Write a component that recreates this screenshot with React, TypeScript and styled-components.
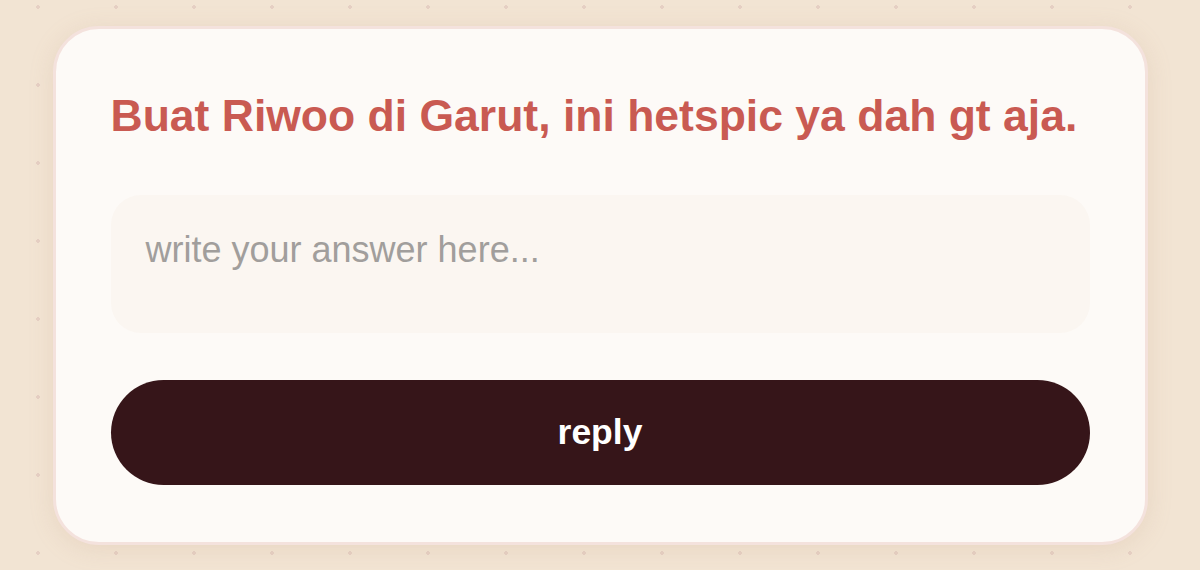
import React from 'react';
import styled, { createGlobalStyle } from 'styled-components';

const GlobalStyle = createGlobalStyle`
  html, body {
    margin: 0;
    padding: 0;
    height: 100%;
  }
  body {
    font-family: "Liberation Sans", Arial, Helvetica, sans-serif;
    background-color: #f2e4d3;
    background-image: radial-gradient(circle, #e6d0c4 1.6px, transparent 2px);
    background-size: 78px 78px;
    background-position: -1px -32px;
  }
  #root {
    height: 100%;
  }
`;

const Page = styled.div`
  height: 570px;
  display: flex;
  align-items: center;
  justify-content: center;
`;

const Card = styled.div`
  width: 1095px;
  height: 519px;
  box-sizing: border-box;
  background: #fdfaf7;
  border: 3px solid #f4e2dd;
  border-radius: 46px;
  box-shadow: 0 4px 24px rgba(190, 150, 120, 0.18);
  padding: 62px 55px 57px;
  display: flex;
  flex-direction: column;
`;

const Question = styled.h1`
  margin: 0;
  color: #c95a52;
  font-size: 44.5px;
  font-weight: 700;
  line-height: 50px;
  white-space: nowrap;
`;

const AnswerBox = styled.textarea`
  margin-top: 54px;
  height: 138px;
  box-sizing: border-box;
  border: none;
  outline: none;
  resize: none;
  background: #fbf6f1;
  border-radius: 30px;
  padding: 34px 35px;
  font-family: inherit;
  font-size: 36px;
  line-height: 42px;
  color: #5a4a48;

  &::placeholder {
    color: #a19e9c;
  }
`;

const ReplyButton = styled.button`
  margin-top: 47px;
  height: 105px;
  border: none;
  border-radius: 53px;
  background: #361519;
  color: #ffffff;
  font-family: inherit;
  font-size: 35.5px;
  font-weight: 700;
  cursor: pointer;
`;

export default function App() {
  return (
    <>
      <GlobalStyle />
      <Page>
        <Card>
          <Question>Buat Riwoo di Garut, ini hetspic ya dah gt aja.</Question>
          <AnswerBox placeholder="write your answer here..." />
          <ReplyButton>reply</ReplyButton>
        </Card>
      </Page>
    </>
  );
}
